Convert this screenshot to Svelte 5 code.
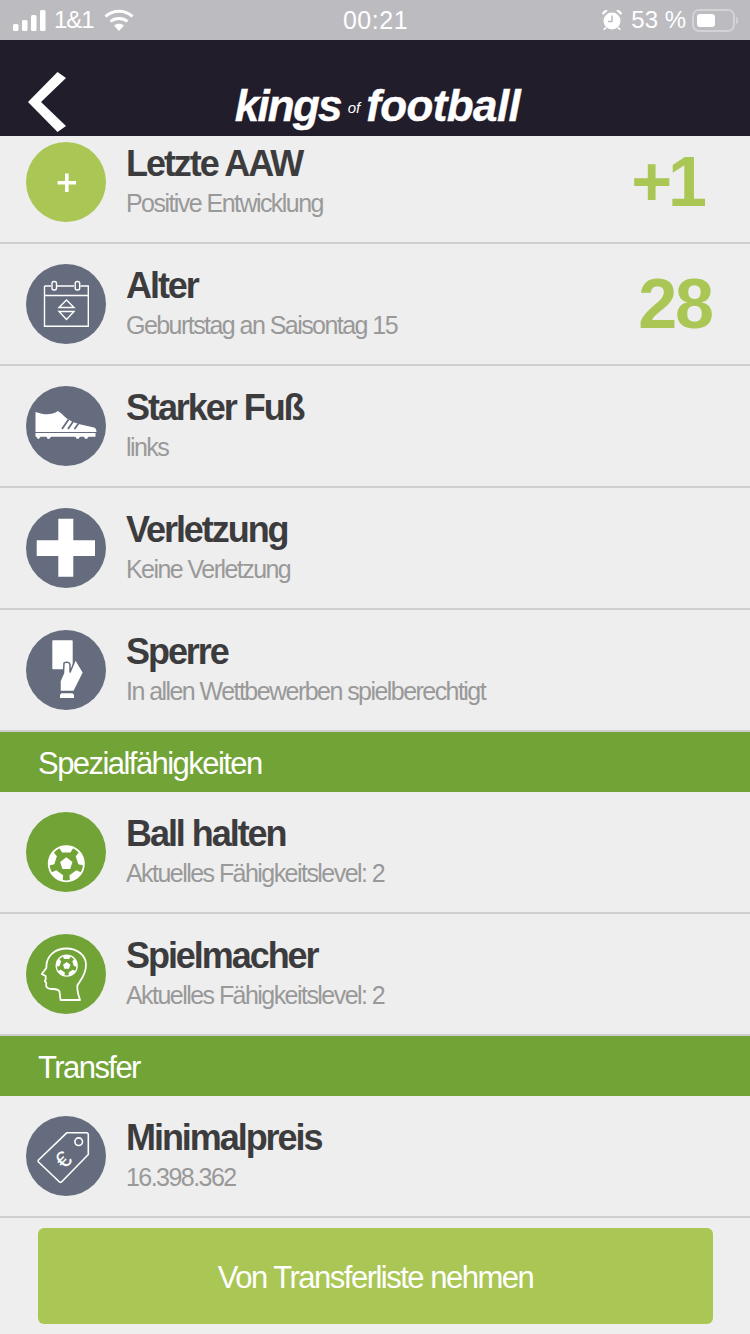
<script>
	const skills = [
		{ title: 'Ball halten', sub: 'Aktuelles Fähigkeitslevel: 2', icon: 'ball' },
		{ title: 'Spielmacher', sub: 'Aktuelles Fähigkeitslevel: 2', icon: 'head' }
	]
	const stats = [
		{ title: 'Alter', sub: 'Geburtstag an Saisontag 15', icon: 'calendar', value: '28' },
		{ title: 'Starker Fuß', sub: 'links', icon: 'shoe' },
		{ title: 'Verletzung', sub: 'Keine Verletzung', icon: 'cross' },
		{ title: 'Sperre', sub: 'In allen Wettbewerben spielberechtigt', icon: 'card' }
	]
	const transfer = [{ title: 'Minimalpreis', sub: '16.398.362', icon: 'tag' }]
</script>

{#snippet ball(cx, cy, r, sw)}
	<circle {cx} {cy} {r} fill="none" stroke="#fff" stroke-width={sw} />
	<polygon
		fill="#fff"
		points="{cx},{cy - r * 0.36} {cx + r * 0.35},{cy - r * 0.1} {cx + r * 0.22},{cy + r * 0.3} {cx - r * 0.22},{cy + r * 0.3} {cx - r * 0.35},{cy - r * 0.1}"
	/>
	{#each [0, 72, 144, 216, 288] as a}
		<path
			fill="#fff"
			transform="rotate({a} {cx} {cy})"
			d="M{cx - r * 0.4} {cy - r * 0.9}Q{cx} {cy - r * 1.08} {cx + r * 0.4} {cy - r * 0.9}L{cx + r * 0.24} {cy - r * 0.64}L{cx - r * 0.24} {cy - r * 0.64}Z"
		/>
	{/each}
{/snippet}

{#snippet icon(name)}
	<svg class="icon" class:green={name === 'ball' || name === 'head'} class:lime={name === 'plus'} viewBox="0 0 80 80">
		{#if name === 'plus'}
			<path fill="#fff" d="M39 31.500h3.600v7.400H50v3.600h-7.400v7.400H39v-7.400h-7.400v-3.600H39z" />
		{:else if name === 'calendar'}
			<g fill="none" stroke="#fff" stroke-width="1.400">
				<path d="M18.500 22h6.500M31 22h17M54.500 22h7.800v40.200H18.500V22M18.500 31.500h43.800" />
				<rect x="26" y="17.500" width="4.500" height="8.500" rx="2" />
				<rect x="49.200" y="17.500" width="4.500" height="8.500" rx="2" />
				<path d="M33 43.500l7.500-7.500 7.500 7.500zM33 47.500h15l-7.500 8z" />
			</g>
		{:else if name === 'shoe'}
			<path fill="#fff" d="M9.500 26l3.500 1c6 2 13.500 2 19-2l4 3c5 6 12 9 21 11l11 2.500c1.500.5 2.500 2 2.500 4.500H9.500z" />
			<path fill="none" stroke="#656c7d" stroke-width="1.800" d="M36 43l6.500-9.500M42 43l5.500-8M48.500 43l4-5.500" />
			<path fill="#fff" d="M9.500 47h60v3.700h-7l-1.500 2h-2l-1-2h-4l-1.500 2h-2l-1-2H25l-1.500 2h-2l-1-2h-6l-1.500 2h-1.500l-1-2h-1z" />
		{:else if name === 'cross'}
			<path fill="#fff" d="M32.300 10.700h15v21.600H69V48H47.300v20.700h-15V48H10.700V32.300h21.600z" />
		{:else if name === 'card'}
			<rect x="26.300" y="10.300" width="20.400" height="29" rx="0.800" fill="#fff" />
			<path
				fill="#fff"
				stroke="#656c7d"
				stroke-width="1.500"
				d="M38 33c2-1.500 5.500-1 6 1.500v8l5.500-13.500 8 13.500-9.500 19H34V51l3.500-8z"
			/>
			<path fill="#fff" d="M35.500 63.300h11l1.500 1.500v3.200H34v-3.200z" />
		{:else if name === 'ball'}
			{@render ball(40.300, 51.700, 17.600, 1.800)}
		{:else if name === 'head'}
			<path
				fill="none"
				stroke="#fff"
				stroke-width="1.800"
				stroke-linejoin="round"
				d="M34.500 66h19.500c-1.500-5-3.500-10-2.500-15 3-5 8.500-10 8.500-20C60 21 51 14.500 40.500 14.500 29 14.500 21 22 20.500 31l-.2 3-4.500 6 3.800 2 .2 3-1 2 1.500 2-.2 3c1 2.500 3 3 5.400 3 3 0 6.500-.5 8 2.500z"
			/>
			{@render ball(40.700, 31.700, 10.500, 1.300)}
		{:else if name === 'tag'}
			<g fill="none" stroke="#fff" stroke-width="1.600" stroke-linejoin="round">
				<path d="M41 16.700h20l1.300 1.300v20.500L35.500 66a1.500 1.500 0 0 1-2 0L12.500 46a1.500 1.500 0 0 1 0-2z" />
				<circle cx="52.700" cy="25.700" r="3.800" />
			</g>
			<text class="euro" x="0" y="0" transform="translate(37 43.500) rotate(-45)">€</text>
		{/if}
	</svg>
{/snippet}

{#snippet row(item)}
	<div class="row">
		{@render icon(item.icon)}
		<div class="text">
			<div class="title">{item.title}</div>
			<div class="sub">{item.sub}</div>
		</div>
		{#if item.value}
			<div class="value">{item.value}</div>
		{/if}
	</div>
{/snippet}

<div class="page">
	<div class="status">
		<div class="status-left">
			<svg width="33" height="21" viewBox="0 0 33 21">
				<rect x="0" y="14" width="5.500" height="7" rx="1.500" fill="#fff" />
				<rect x="9" y="10" width="5.500" height="11" rx="1.500" fill="#fff" />
				<rect x="18" y="5" width="5.500" height="16" rx="1.500" fill="#fff" />
				<rect x="27" y="0" width="5.500" height="21" rx="1.500" fill="#fff" />
			</svg>
			<span class="carrier">1&amp;1</span>
			<svg width="30" height="22" viewBox="0 0 30 22">
				<path fill="none" stroke="#fff" stroke-width="3" d="M1.500 7.500C9 .5 21 .5 28.500 7.500M6.500 12.500c4.500-4 12.500-4 17 0" />
				<path fill="#fff" d="M10 16.500c3-2.500 7-2.500 10 0l-5 5.500z" />
			</svg>
		</div>
		<div class="time">00:21</div>
		<div class="status-right">
			<svg width="22" height="22" viewBox="0 0 22 22">
				<circle cx="11" cy="12" r="8.500" fill="#fff" />
				<path fill="none" stroke="#bcbbc0" stroke-width="1.500" d="M11 6.500V12.500H7" />
				<path fill="#fff" d="M2 6l5-4.500-3-.5-3 3zM20 6l-5-4.500 3-.5 3 3zM4 18l-2 3h1.500L6 19zM18 18l2 3h-1.500L16 19z" />
			</svg>
			<span class="percent">53 %</span>
			<div class="battery"><div class="charge"></div></div>
			<div class="nub"></div>
		</div>
	</div>

	<header>
		<svg class="back" width="38" height="60" viewBox="0 0 38 60">
			<path fill="#fff" d="M29.500 0L38 6 13 30l25 24-8.500 6L0 30z" />
		</svg>
		<div class="logo">
			<span class="kings">kings</span><span class="of">of</span><span class="football">football</span>
		</div>
	</header>

	<div class="list">
		<div class="row first">
			{@render icon('plus')}
			<div class="text">
				<div class="title">Letzte AAW</div>
				<div class="sub">Positive Entwicklung</div>
			</div>
			<div class="value">+1</div>
		</div>
		{#each stats as item}
			{@render row(item)}
		{/each}
		<div class="section">Spezialfähigkeiten</div>
		{#each skills as item}
			{@render row(item)}
		{/each}
		<div class="section">Transfer</div>
		{#each transfer as item}
			{@render row(item)}
		{/each}
	</div>

	<div class="footer">
		<button>Von Transferliste nehmen</button>
	</div>
</div>

<style>
	:global(body) {
		margin: 0;
		background: #eeeeee;
	}

	.page {
		width: 750px;
		height: 1334px;
		overflow: hidden;
		background: #eeeeee;
		font-family: 'Liberation Sans', Arial, sans-serif;
	}

	.status {
		height: 40px;
		background: #bcbbc0;
		color: #fff;
		font-size: 24px;
		display: grid;
		grid-template-columns: 1fr auto 1fr;
		align-items: center;
		padding: 0 12px 0 13px;
		box-sizing: border-box;
	}

	.status-left {
		display: flex;
		align-items: center;
		gap: 8px;
	}

	.carrier {
		letter-spacing: -1px;
		margin-right: 2px;
	}

	.time {
		font-size: 25px;
		letter-spacing: 0.5px;
	}

	.status-right {
		display: flex;
		align-items: center;
		justify-content: flex-end;
	}

	.percent {
		margin: 0 6px 0 8px;
	}

	.battery {
		width: 43px;
		height: 23px;
		box-sizing: border-box;
		border: 2px solid #d3d2d6;
		border-radius: 7px;
		padding: 3px;
	}

	.charge {
		width: 18px;
		height: 13px;
		background: #fff;
		border-radius: 3px;
	}

	.nub {
		width: 2px;
		height: 7px;
		margin-left: 1px;
		background: #d3d2d6;
		border-radius: 0 2px 2px 0;
	}

	header {
		height: 96px;
		background: #221d2a;
		box-sizing: border-box;
		display: grid;
		grid-template-columns: 1fr auto 1fr;
		padding: 0 28px;
	}

	.back {
		margin-top: 32px;
	}

	.logo {
		margin: 35px 0 0 5px;
		color: #fff;
		font-size: 44px;
		line-height: 50px;
		font-weight: 700;
		font-style: italic;
		display: flex;
		align-items: center;
		-webkit-text-stroke: 0.4px #fff;
	}

	.kings {
		letter-spacing: -1.800px;
	}

	.football {
		letter-spacing: -0.600px;
	}

	.of {
		font-size: 15px;
		font-weight: 400;
		margin: 4px 6px 0 7px;
		-webkit-text-stroke: 0;
	}

	.row {
		height: 122px;
		box-sizing: border-box;
		border-bottom: 2px solid #cfcfcf;
		padding: 20px 38px 0 26px;
		display: flex;
		align-items: flex-start;
	}

	.row.first {
		height: 108px;
		padding-top: 6px;
	}

	.row.first .value {
		margin-right: 9px;
		letter-spacing: -4px;
	}

	.icon {
		width: 80px;
		height: 80px;
		flex: none;
		border-radius: 50%;
		background: #656c7d;
	}

	.icon.green {
		background: #72a336;
	}

	.icon.lime {
		background: #aac654;
	}

	.euro {
		fill: #fff;
		font-size: 23px;
		text-anchor: middle;
		dominant-baseline: central;
	}

	.text {
		margin-left: 20px;
		flex: 1;
	}

	.title {
		font-size: 36px;
		line-height: 40px;
		font-weight: 700;
		color: #3c3c3e;
		letter-spacing: -2.050px;
		margin-top: 2px;
	}

	.sub {
		font-size: 25px;
		line-height: 30px;
		color: #999999;
		letter-spacing: -1.550px;
		margin-top: 4px;
	}

	.value {
		font-size: 70px;
		line-height: 80px;
		font-weight: 700;
		color: #aac654;
		letter-spacing: -2px;
	}

	.section {
		height: 60px;
		background: #72a336;
		color: #fff;
		font-size: 31px;
		line-height: 64px;
		letter-spacing: -1.550px;
		padding-left: 38px;
	}

	.footer {
		padding: 10px 37px 10px 38px;
	}

	button {
		display: block;
		width: 100%;
		height: 96px;
		border: none;
		border-radius: 6px;
		background: #aac654;
		color: #fff;
		font-family: inherit;
		font-size: 31px;
		letter-spacing: -1.500px;
		padding: 3px 0 0;
	}
</style>
